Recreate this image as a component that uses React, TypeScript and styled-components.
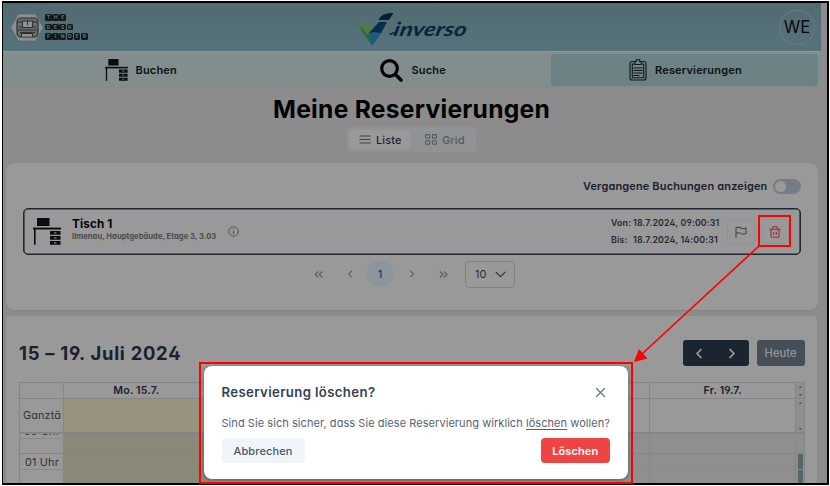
import React from "react";
import styled, { createGlobalStyle } from "styled-components";

const GlobalStyle = createGlobalStyle`
  * { box-sizing: border-box; }
  body {
    margin: 0;
    background: #fff;
    font-family: Inter, "Liberation Sans", sans-serif;
    font-feature-settings: "cv02", "cv03", "cv04", "cv11";
    overflow: hidden;
  }
`;

const Stage = styled.div`
  position: relative;
  width: 830px;
  height: 486px;
  padding: 1px 1px 1px 2px;
`;

const Frame = styled.div`
  width: 827px;
  height: 484px;
  border: 2px solid #000;
  border-left-width: 1px;
  background: #8c8c8c;
  overflow: hidden;
  padding-right: 6px;
  display: flex;
  flex-direction: column;
`;

const Header = styled.header`
  height: 48px;
  flex: none;
  background: linear-gradient(#526b73, #56727a);
  display: grid;
  grid-template-columns: 1fr 112px 1fr;
  align-items: center;
`;

const Brand = styled.div`
  display: flex;
  align-items: center;
  gap: 1px;
  padding-left: 7px;
`;

const Tiles = styled.div`
  display: flex;
  flex-direction: column;
  gap: 3px;
`;

const TileRow = styled.div`
  display: flex;
  gap: 0.5px;
`;

const Tile = styled.span`
  width: 6.7px;
  height: 6.7px;
  border-radius: 1.5px;
  background: #121819;
  color: #66767a;
  font-size: 5px;
  font-weight: 700;
  line-height: 6.7px;
  text-align: center;
`;

const Company = styled.div`
  display: flex;
  align-items: flex-start;
  height: 48px;
  padding-top: 7px;
`;

const CompanyName = styled.span`
  font: italic 700 19.5px/28px Lato, sans-serif;
  color: #06263b;
  margin: 5px 0 0 -1px;
  transform: skewX(-12deg) scaleX(1.24);
  transform-origin: 0 70%;
`;

const Avatar = styled.div`
  justify-self: end;
  margin-right: 6px;
  width: 36px;
  height: 35px;
  border: 1px solid #657e85;
  border-radius: 50%;
  display: grid;
  place-items: center;
  font-size: 16.8px;
  color: #070b0d;
`;

const Nav = styled.nav`
  height: 37px;
  flex: none;
  background: #828e8e;
  border-top: 1px solid #8b9797;
  display: grid;
  grid-template-columns: 275px 273px 267px;
  padding-top: 2px;
`;

const NavItem = styled.div<{ $active?: boolean; $shift: number; $gap: number }>`
  height: 32px;
  padding-left: ${(p) => p.$shift}px;
  border-radius: 3px;
  background: ${(p) => (p.$active ? "#6d8284" : "transparent")};
  display: flex;
  align-items: center;
  gap: ${(p) => p.$gap}px;
  font-size: 11px;
  font-weight: 640;
  letter-spacing: 0.17px;
  color: #0b1215;
`;

const PageTitle = styled.h1`
  margin: 6px 0 0 270px;
  height: 29px;
  font-size: 24.6px;
  line-height: 30px;
  font-weight: 700;
  letter-spacing: 0.28px;
  color: #000;
  white-space: nowrap;
`;

const ViewSwitch = styled.div`
  margin: 4px 0 0 344px;
  width: 129px;
  height: 25px;
  flex: none;
  padding: 3px;
  border-radius: 4px;
  background: #909294;
  display: flex;
`;

const ViewOption = styled.div<{ $active?: boolean }>`
  width: ${(p) => (p.$active ? 60 : 63)}px;
  height: 19px;
  border-radius: 3px;
  background: ${(p) => (p.$active ? "#999" : "transparent")};
  color: ${(p) => (p.$active ? "#23282f" : "#515963")};
  display: flex;
  align-items: center;
  gap: 5px;
  padding-left: ${(p) => (p.$active ? 9 : 15)}px;
  font-size: 11px;
  font-weight: 540;
  letter-spacing: 0.1px;
`;

const Card = styled.section<{ $calendar?: boolean }>`
  margin: ${(p) => (p.$calendar ? "6px 0 0 3px" : "11px 0 0 3px")};
  width: ${(p) => (p.$calendar ? 811 : 812)}px;
  height: ${(p) => (p.$calendar ? 180 : 147)}px;
  flex: none;
  border-radius: ${(p) => (p.$calendar ? "4px" : "8px")};
  background: #999;
  box-shadow: 0 1px 1px #828282;
`;

const PastRow = styled.div`
  display: flex;
  align-items: center;
  justify-content: flex-end;
  gap: 5.5px;
  padding: 11px 17px 0 0;
  height: 34px;
  font-size: 11px;
  font-weight: 640;
  letter-spacing: 0.14px;
  color: #1b2130;
`;

const Switch = styled.span`
  width: 28px;
  height: 15px;
  border-radius: 8px;
  background: #747c88;
  padding: 2px;
  margin-top: 2px;
  &::after {
    content: "";
    display: block;
    width: 11px;
    height: 11px;
    border-radius: 50%;
    background: #999;
  }
`;

const Booking = styled.div`
  margin: 11px 0 0 17px;
  width: 778px;
  height: 47px;
  border: 1px solid #222633;
  box-shadow: inset 0 0 0 0.6px #222633;
  border-radius: 5px;
  display: flex;
  align-items: center;
  padding-left: 9px;
`;

const BookingText = styled.div`
  width: 146px;
  margin-left: 11px;
  height: 33px;
  white-space: nowrap;
`;

const DeskName = styled.div`
  font-size: 11.7px;
  line-height: 18px;
  font-weight: 660;
  letter-spacing: 0.15px;
  color: #050505;
`;

const DeskPlace = styled.div`
  font-size: 7.6px;
  line-height: 8px;
  font-weight: 700;
  letter-spacing: 0.04px;
  color: #484c51;
`;

const InfoMark = styled.div`
  margin-left: 10px;
  display: flex;
`;

const Times = styled.div`
  margin-left: auto;
  width: 116px;
  display: grid;
  grid-template-columns: 22px 1fr;
  row-gap: 3px;
  font-size: 8.8px;
  line-height: 14px;
  font-weight: 640;
  letter-spacing: 0.17px;
  color: #25292f;
  white-space: nowrap;
`;

const ActionButton = styled.div<{ $last?: boolean }>`
  width: 28px;
  height: 25px;
  border: 1px solid ${(p) => (p.$last ? "#9e8c8c" : "#919294")};
  border-radius: 4px;
  display: grid;
  place-items: center;
  margin-right: ${(p) => (p.$last ? 11.5 : 5.5)}px;
`;

const Pager = styled.div`
  display: flex;
  align-items: center;
  margin: 5px 0 0 296px;
  height: 28px;
  color: #5a616b;
  font-size: 11px;
`;

const PagerStep = styled.span<{ $w: number }>`
  width: ${(p) => p.$w}px;
  display: grid;
  place-items: center;
`;

const PagerPage = styled.span`
  width: 28px;
  height: 26px;
  margin-left: 1px;
  border-radius: 14px;
  background: #8c959b;
  color: #1d3770;
  display: grid;
  place-items: center;
  font-weight: 500;
`;

const PageSize = styled.div`
  margin-left: 8px;
  width: 50px;
  height: 27px;
  border: 1px solid #7e8389;
  border-radius: 4px;
  display: flex;
  align-items: center;
  gap: 9px;
  padding-left: 9px;
  font-size: 11px;
  color: #2b3038;
`;

const CalendarBar = styled.div`
  display: flex;
  align-items: flex-start;
  padding: 24px 12.5px 0 13px;
  height: 66px;
`;

const CalendarTitle = styled.h2`
  margin: 1px auto 0 0;
  font-size: 18.4px;
  line-height: 24px;
  font-weight: 660;
  letter-spacing: 0.73px;
  color: #1b222d;
`;

const StepGroup = styled.div`
  width: 65.5px;
  height: 26px;
  border-radius: 3px;
  background: #1a252f;
  display: flex;
  align-items: center;
  justify-content: space-around;
  color: #a0a0a0;
`;

const TodayButton = styled.div`
  margin-left: 8px;
  width: 48px;
  height: 26px;
  border-radius: 3px;
  background: #464e57;
  color: #949698;
  font-size: 11.2px;
  font-weight: 500;
  line-height: 26px;
  text-align: center;
`;

const Week = styled.div`
  margin-left: 12.5px;
  width: 786px;
  border: 1px solid #858585;
  border-bottom: 0;
`;

const WeekRow = styled.div<{ $h: number; $last?: boolean; $dark?: boolean }>`
  height: ${(p) => p.$h}px;
  display: grid;
  grid-template-columns: 44px repeat(5, 146.6px) 8px;
  border-bottom: ${(p) => (p.$last ? "2px" : "1px")} solid
    ${(p) => (p.$dark ? "#8a8a8a" : "#858585")};
`;

const Cell = styled.div<{ $tone?: "day" | "slot" | "track" }>`
  border-right: 1px solid #868686;
  background: ${(p) =>
    p.$tone === "day" ? "#98937e" : p.$tone === "slot" ? "#8b8878" : p.$tone === "track" ? "#8f8f8f" : "transparent"};
  text-align: center;
  font-size: 10.6px;
  line-height: 16px;
  font-weight: 640;
  letter-spacing: 0.2px;
  color: #1b2230;
  overflow: hidden;
  &:last-child { border-right: 0; background: #8f8f8f; }
`;

const AxisLabel = styled.div<{ $top: number }>`
  margin-top: ${(p) => p.$top}px;
  padding-left: 2px;
  font-size: 10.8px;
  line-height: 14px;
  font-weight: 400;
  color: #2c323a;
  white-space: nowrap;
`;

const ScrollTrack = styled.div`
  height: 100%;
  display: flex;
  flex-direction: column;
  align-items: center;
  justify-content: space-between;
  padding: 3px 0 2px;
`;

const Caret = styled.i<{ $down?: boolean }>`
  width: 4px;
  height: 2px;
  background: #4c5a5c;
  clip-path: ${(p) => (p.$down ? "polygon(0 0, 100% 0, 50% 100%)" : "polygon(0 100%, 100% 100%, 50% 0)")};
`;

const Thumb = styled.div<{ $start?: boolean }>`
  width: 5px;
  height: 34px;
  margin: ${(p) => (p.$start ? -3 : 0)}px auto 0;
  background: #56656a;
`;

const Dialog = styled.div`
  position: absolute;
  left: 203.5px;
  top: 366px;
  width: 424.5px;
  height: 113px;
  border-radius: 8px;
  background: #fff;
  box-shadow: 0 1px 4px rgba(0, 0, 0, 0.4);
  padding: 17px 18px 0;
`;

const DialogHead = styled.div`
  display: flex;
  justify-content: space-between;
  align-items: center;
  height: 18px;
  padding-right: 4px;
  font-size: 13.2px;
  font-weight: 600;
  letter-spacing: 0.37px;
  color: #334155;
`;

const DialogText = styled.p`
  margin: 15px 0 7px;
  font-size: 11px;
  line-height: 15px;
  letter-spacing: 0.06px;
  color: #566376;
  white-space: nowrap;
  text-underline-offset: 2px;
`;

const DialogButtons = styled.div`
  display: flex;
  justify-content: space-between;
`;

const DialogButton = styled.button<{ $danger?: boolean }>`
  width: ${(p) => (p.$danger ? 69.5 : 83)}px;
  height: 25px;
  padding: 0;
  border: 0;
  border-radius: 4px;
  background: ${(p) => (p.$danger ? "#ef4444" : "#f1f5f9")};
  color: ${(p) => (p.$danger ? "#fff" : "#475569")};
  font-family: inherit;
  font-size: 11px;
  font-weight: ${(p) => (p.$danger ? 600 : 550)};
  font-feature-settings: inherit;
  letter-spacing: 0.1px;
`;

const Annotation = styled.svg`
  position: absolute;
  left: 0;
  top: 0;
`;

const DeskIcon = ({ w, h, shade }: { w: number; h: number; shade: string }) => (
  <svg width={w} height={h} viewBox="0 0 28 27" preserveAspectRatio="none" fill="#0b0d0d">
    <rect x="4" y="0" width="12.5" height="8" />
    <rect x="0" y="9.6" width="28" height="1.9" />
    <rect x="1" y="11" width="1.6" height="15.8" />
    <path d="M17 13h10.5v3.8H17zM17 18h10.5v3.8H17zM17 23h10.5v3.8H17z" />
    <path d="M21 14.9h2.5M21 19.9h2.5M21 24.9h2.5" stroke={shade} strokeWidth="1" />
  </svg>
);

const Chevron = ({ d, w = 6, h = 8, sw = 1.2 }: { d: string; w?: number; h?: number; sw?: number }) => (
  <svg width={w} height={h} viewBox={`0 0 ${w} ${h}`} fill="none" stroke="currentColor" strokeWidth={sw} strokeLinecap="round" strokeLinejoin="round">
    <path d={d} />
  </svg>
);

const BrandMark = () => (
  <svg width="34" height="29" viewBox="0 0 34 29">
    <path d="M.7 14.5 8.5 1h17l7.8 13.5L25.5 28h-17Z" fill="#8d8f8f" stroke="#596467" strokeWidth=".7" />
    <rect x="7" y="5" width="21" height="19" rx="4" fill="#686c6c" stroke="#252a2b" strokeWidth="1.1" />
    <path d="M8 9h4M23 9h4M8 17h19M10 19.5h15M9 14h3M23 14h3" stroke="#2e3334" strokeWidth="1" />
    <rect x="12.5" y="8" width="10" height="6.5" fill="#8e9292" stroke="#252a2b" strokeWidth=".9" />
    <path d="M17.5 8v4M11.5 23.5V20.5h11v3" fill="#8e9292" stroke="#252a2b" strokeWidth="1" />
  </svg>
);

const CompanyMark = () => (
  <svg width="38" height="38" viewBox="0 0 38 38" overflow="visible">
    <path d="m1 13 11 11 1 1 3 11Z" fill="#286b35" />
    <path d="M1 13h11l5 9-4 4Z" fill="#4f7d43" />
    <path d="m16 36-4-11 5-4 9 1Z" fill="#1c5b7d" />
    <path d="m12 24 11-12h8l-6 11-8-1Z" fill="#062d49" />
    <path d="M22.500 10c3-5 5-7 15-7l-4.500 7Z" fill="#071f32" />
    <path d="M33.500 24.500q3.500-1.800 7-1.500" fill="none" stroke="#06263b" strokeWidth="1.800" />
  </svg>
);

const days = ["Mo. 15.7.", "", "", "", "Fr. 19.7."];

const Carets = () => (
  <ScrollTrack>
    <Caret />
    <Caret $down />
  </ScrollTrack>
);

export default function App() {
  return (
    <Stage>
      <GlobalStyle />
      <Frame>
        <Header>
          <Brand>
            <BrandMark />
            <Tiles>
              {["THE", "DESK", "FINDER"].map((word) => (
                <TileRow key={word}>
                  {word.split("").map((c, i) => (
                    <Tile key={i}>{c}</Tile>
                  ))}
                </TileRow>
              ))}
            </Tiles>
          </Brand>
          <Company>
            <CompanyMark />
            <CompanyName>inverso</CompanyName>
          </Company>
          <Avatar>WE</Avatar>
        </Header>
        <Nav>
          <NavItem $shift={102} $gap={7.5}>
            <DeskIcon w={23} h={22} shade="#828e8e" />
            Buchen
          </NavItem>
          <NavItem $shift={102} $gap={8.5}>
            <svg width="23" height="23" viewBox="0 0 23 23" fill="none" stroke="#000" strokeLinecap="round">
              <circle cx="9.5" cy="9.5" r="7.8" strokeWidth="3.2" />
              <path d="m15.5 15.5 5.5 5.5" strokeWidth="3.6" />
            </svg>
            Suche
          </NavItem>
          <NavItem $active $shift={78} $gap={8}>
            <svg width="18" height="22" viewBox="0 0 18 22" fill="none" stroke="#11191a" strokeWidth="1.1">
              <path d="M5.5 2.5H3a2 2 0 0 0-2 2V19a2 2 0 0 0 2 2h12a2 2 0 0 0 2-2V4.5a2 2 0 0 0-2-2h-2.500" />
              <path d="M5.5 5H3.3v13.700h11.400V5h-2.200M4.500 9h9M4.500 11.500h9M4.500 14h9M4.500 16.500h6" />
              <path d="M5.8 5.500v-3h1.500V.8h3.400v1.700h1.500v3Z" />
            </svg>
            Reservierungen
          </NavItem>
        </Nav>
        <PageTitle>Meine Reservierungen</PageTitle>
        <ViewSwitch>
          <ViewOption $active>
            <svg width="12" height="9" viewBox="0 0 12 9" stroke="#3b434d" strokeWidth="1.2">
              <path d="M.5 1h11M.5 4.5h11M.5 8h11" />
            </svg>
            Liste
          </ViewOption>
          <ViewOption>
            <svg width="12" height="11" viewBox="0 0 12 11" fill="none" stroke="currentColor" strokeWidth="1.1">
              <rect x=".6" y=".6" width="4" height="3.6" rx=".8" />
              <rect x="7.4" y=".6" width="4" height="3.6" rx=".8" />
              <rect x=".6" y="6.7" width="4" height="3.6" rx=".8" />
              <rect x="7.4" y="6.7" width="4" height="3.6" rx=".8" />
            </svg>
            Grid
          </ViewOption>
        </ViewSwitch>
        <Card>
          <PastRow>
            Vergangene Buchungen anzeigen
            <Switch />
          </PastRow>
          <Booking>
            <DeskIcon w={28} h={27} shade="#999" />
            <BookingText>
              <DeskName>Tisch 1</DeskName>
              <DeskPlace>Ilmenau, Hauptgebäude, Etage 3, 3.03</DeskPlace>
            </BookingText>
            <InfoMark>
              <svg width="11" height="11" viewBox="0 0 11 11" fill="none" stroke="#475260">
                <circle cx="5.5" cy="5.5" r="4.7" strokeWidth="1" />
                <path d="M5.5 4.9v3M5.5 2.7v1" strokeWidth="1.1" />
              </svg>
            </InfoMark>
            <Times>
              <span>Von:</span>
              <span>18.7.2024, 09:00:31</span>
              <span>Bis:</span>
              <span>18.7.2024, 14:00:31</span>
            </Times>
            <ActionButton>
              <svg width="12" height="12" viewBox="0 0 12 12" fill="none" stroke="#3f4955" strokeWidth="1.1" strokeLinejoin="round" strokeLinecap="round">
                <path d="M1 11.500V1.800C3 .8 4.500 1 6 2s3 1 5 0v5.400c-2 1-3.500 1-5 0s-3-1-5 0" />
              </svg>
            </ActionButton>
            <ActionButton $last>
              <svg width="12" height="12" viewBox="0 0 12 12" fill="none" stroke="#98303a" strokeWidth="1.1" strokeLinejoin="round" strokeLinecap="round">
                <path d="M.8 3.200h10.400M3.800 3V1.600q0-.8.800-.8h2.800q.8 0 .8.800V3M2 3.200v7q0 1 1 1h6q1 0 1-1v-7M4.700 6v2.500M7.300 6v2.500" />
              </svg>
            </ActionButton>
          </Booking>
          <Pager>
            <PagerStep $w={32}><Chevron w={9} h={7} d="M4 .8 1.2 3.5 4 6.2M8 .8 5.2 3.5 8 6.2" /></PagerStep>
            <PagerStep $w={31}><Chevron d="M4.5 1.2 1.7 4l2.800 2.800" /></PagerStep>
            <PagerPage>1</PagerPage>
            <PagerStep $w={35}><Chevron d="M1.7 1.2 4.5 4 1.7 6.8" /></PagerStep>
            <PagerStep $w={28}><Chevron w={9} h={7} d="M1.2.8 4 3.5 1.2 6.2M5.2.8 8 3.5 5.2 6.2" /></PagerStep>
            <PageSize>
              10
              <Chevron w={11} h={7} d="M1 1.2 5.5 5.7 10 1.2" />
            </PageSize>
          </Pager>
        </Card>
        <Card $calendar>
          <CalendarBar>
            <CalendarTitle>15 – 19. Juli 2024</CalendarTitle>
            <StepGroup>
              <Chevron w={8} h={11} sw={1.7} d="M6 1.5 2 5.5l4 4" />
              <Chevron w={8} h={11} sw={1.7} d="m2 1.5 4 4-4 4" />
            </StepGroup>
            <TodayButton>Heute</TodayButton>
          </CalendarBar>
          <Week>
            <WeekRow $h={16}>
              <Cell />
              {days.map((d, i) => <Cell key={i}>{d}</Cell>)}
              <Cell><Carets /></Cell>
            </WeekRow>
            <WeekRow $h={35} $last>
              <Cell><AxisLabel $top={10}>Ganztä</AxisLabel></Cell>
              {days.map((d, i) => <Cell key={i} $tone={i === 0 ? "day" : undefined} />)}
              <Cell><Carets /></Cell>
            </WeekRow>
            <WeekRow $h={5} $dark>
              <Cell><AxisLabel $top={-9}>00 Uhr</AxisLabel></Cell>
              {days.map((d, i) => <Cell key={i} $tone={i === 0 ? "slot" : "track"} />)}
              <Cell />
            </WeekRow>
            <WeekRow $h={15}>
              <Cell />
              {days.map((d, i) => <Cell key={i} $tone={i === 0 ? "slot" : "track"} />)}
              <Cell />
            </WeekRow>
            <WeekRow $h={16} $dark>
              <Cell><AxisLabel $top={2}>01 Uhr</AxisLabel></Cell>
              {days.map((d, i) => <Cell key={i} $tone={i === 0 ? "slot" : "track"} />)}
              <Cell><Thumb $start /></Cell>
            </WeekRow>
            <WeekRow $h={16}>
              <Cell />
              {days.map((d, i) => <Cell key={i} $tone={i === 0 ? "slot" : "track"} />)}
              <Cell><Thumb /></Cell>
            </WeekRow>
          </Week>
        </Card>
      </Frame>
      <Dialog role="dialog">
        <DialogHead>
          Reservierung löschen?
          <svg width="11" height="11" viewBox="0 0 11 11" stroke="#64748b" strokeWidth="1.2" strokeLinecap="round">
            <path d="m1.5 1.5 8 8M9.5 1.5l-8 8" />
          </svg>
        </DialogHead>
        <DialogText>
          Sind Sie sich sicher, dass Sie diese Reservierung wirklich <u>löschen</u> wollen?
        </DialogText>
        <DialogButtons>
          <DialogButton>Abbrechen</DialogButton>
          <DialogButton $danger>Löschen</DialogButton>
        </DialogButtons>
      </Dialog>
      <Annotation width="830" height="486" fill="none" stroke="#f00" strokeWidth="2">
        <rect x="759" y="216" width="31" height="30" />
        <rect x="200" y="363" width="432" height="120" />
        <path d="M759 246 642 354" strokeWidth="1.7" />
        <path d="m634 362 5-13 8.5 9.5Z" fill="#f00" stroke="none" />
      </Annotation>
    </Stage>
  );
}
